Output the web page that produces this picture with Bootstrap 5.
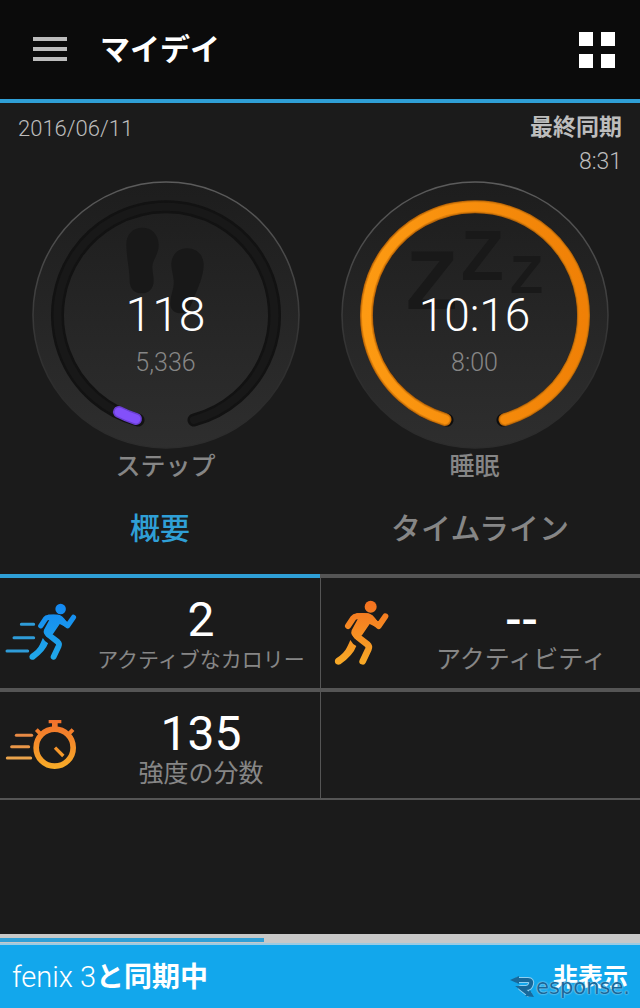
<!DOCTYPE html>
<html lang="ja" data-bs-theme="dark">
<head>
<meta charset="utf-8">
<meta name="viewport" content="width=device-width, initial-scale=1">
<title>マイデイ</title>
<link href="https://cdn.jsdelivr.net/npm/bootstrap@5.3.0/dist/css/bootstrap.min.css" rel="stylesheet">
<style>
  :root { --accent: #2f9fd6; --rule: #555; --muted: #868686; --soft: #bdbdbd; }
  body { background: #1b1b1b; color: #fff; font-family: Roboto, "Noto Sans CJK JP", sans-serif; }
  h1, h2, p { margin: 0; }
  .topbar { background: #0b0b0b; border-bottom: 4px solid var(--accent); height: 103px; padding: 0 24px 0 32px; }
  .topbar h1 { font-size: 30px; line-height: 40px; font-weight: 700; margin-left: 33px; }
  .sync-info { color: var(--soft); font-size: 23px; line-height: 34px; font-weight: 300; padding: 8px 18px 2px; }
  .sync-info time { font-size: 22px; line-height: 36px; }
  .sync-title { font-weight: 700; }
  .dials { padding: 0 11px; }
  .dial { display: grid; justify-items: center; }
  .dial > * { grid-area: 1 / 1; }
  .dial-svg { width: 268px; height: 268px; }
  .dial-text { padding-top: 106px; font-weight: 300; text-align: center; }
  .dial-value { font-size: 48px; line-height: 56px; }
  .dial-value.clock { font-size: 46px; }
  .dial-goal { font-size: 25px; line-height: 32px; margin-top: 4px; color: var(--muted); }
  .dial-name { font-size: 25px; line-height: 35px; font-weight: 500; color: var(--muted); text-align: center; }
  .view-tabs .nav-link { border: 0; border-bottom: 4px solid var(--rule); border-radius: 0; background: none; color: var(--muted); font-size: 30px; line-height: 40px; font-weight: 500; padding: 25px 0; }
  .view-tabs .nav-link.active { color: var(--accent); border-color: var(--accent); }
  .metric { min-height: 114px; border-bottom: 4px solid var(--rule); }
  .metric.last-row { min-height: 108px; border-bottom-width: 2px; }
  .metric.right-col { border-left: 1px solid var(--rule); }
  .metric-icon { width: 82px; height: 66px; }
  .metric-text { padding-top: 18px; }
  .metric-value { font-size: 48px; line-height: 48px; }
  .metric-value.blank { font-weight: 500; }
  .metric-label { font-size: 25px; line-height: 32px; color: var(--muted); }
  .metric-label.long { font-size: 21px; }
  .sync-progress { height: 11px; border-radius: 0; background: #c8c8c8; border-bottom: 2px solid #9ccbe2; padding: 4px 0 1px; }
  .sync-progress .progress-bar { background: var(--accent); }
  .sync-bar { background: #12a7ec; height: 63px; padding: 2px 12px 0; font-size: 28px; line-height: 40px; }
  .sync-bar .device { font-size: 29px; font-weight: 300; }
  .sync-bar .hide-btn { font-size: 25px; line-height: 40px; font-weight: 700; color: #fff; }
  .watermark { right: 10px; bottom: 8px; color: #17699b; font: 21px/26px "DejaVu Sans", sans-serif; text-shadow: 0 0 2px #a9dcf5, 0 0 1px #a9dcf5; pointer-events: none; }
</style>
</head>
<body>
<svg width="0" height="0" class="position-absolute" aria-hidden="true">
  <defs>
    <linearGradient id="face" x1="0" y1="0" x2="0" y2="1"><stop offset="0" stop-color="#1d1d1d"/><stop offset="1" stop-color="#2e2e2e"/></linearGradient>
    <linearGradient id="rim" x1="0" y1="0" x2="0" y2="1"><stop offset="0" stop-color="#5c5c5c"/><stop offset=".6" stop-color="#343434"/><stop offset=".8" stop-color="#2c2c2c"/></linearGradient>
    <linearGradient id="blue" gradientUnits="userSpaceOnUse" x1="0" y1="30" x2="0" y2="225"><stop offset="0" stop-color="#1388f2"/><stop offset="1" stop-color="#21a9e8"/></linearGradient>
    <linearGradient id="orange" gradientUnits="userSpaceOnUse" x1="0" y1="30" x2="0" y2="225"><stop offset="0" stop-color="#f4701f"/><stop offset="1" stop-color="#f8ab27"/></linearGradient>
    <linearGradient id="watch" gradientUnits="userSpaceOnUse" x1="0" y1="390" x2="0" y2="540"><stop offset="0" stop-color="#f2702c"/><stop offset="1" stop-color="#f8ae28"/></linearGradient>
    <linearGradient id="amber" gradientUnits="userSpaceOnUse" x1="-110" y1="0" x2="110" y2="0"><stop offset="0" stop-color="#fd9a12"/><stop offset="1" stop-color="#f08006"/></linearGradient>
    <g id="runner" stroke-linecap="round" stroke-linejoin="round">
      <circle cx="137" cy="50" r="18" stroke="none"/>
      <path fill="none" stroke-width="18" d="M69 108L85 84Q88 80 96 79L128 79L161 108L181 79"/>
      <path stroke="none" d="M94 70Q120 68 134 71Q143 74 150 84L160 98L154 112L134 102L112 134L96 150Q74 136 80 121L98 88Z"/>
      <path fill="none" stroke-width="20" d="M96 130Q92 136 100 142L127 163Q134 169 130 178L113 214"/>
      <path stroke="none" d="M76 150Q82 162 94 168Q84 196 46 223Q37 227 31 220Q27 211 34 205Q58 190 66 172Q72 160 76 150Z"/>
    </g>
  </defs>
</svg>

<div class="d-flex flex-column min-vh-100">
  <header class="topbar d-flex align-items-center">
    <button class="btn p-0 border-0 d-flex" type="button" aria-label="メニュー">
      <svg width="35" height="25" viewBox="0 0 35 25" fill="#bcbcbc"><path d="M1 0h34v4H1zM1 10h34v4H1zM1 20h34v4H1z"/></svg>
    </button>
    <h1>マイデイ</h1>
    <button class="btn p-0 border-0 d-flex ms-auto" type="button" aria-label="グリッド">
      <svg width="37" height="36" viewBox="0 0 37 36" fill="#fff"><path d="M0 0h14v14H0zM22 0h14v14H22zM0 22h14v14H0zM22 22h14v14H22z"/></svg>
    </button>
  </header>

  <main>
    <div class="sync-info d-flex justify-content-between">
      <time datetime="2016-06-11">2016/06/11</time>
      <div class="text-end"><div class="sync-title">最終同期</div><div>8:31</div></div>
    </div>

    <div class="dials row g-0">
      <section class="col-6">
        <div class="dial">
          <svg class="dial-svg" viewBox="-134 -134 268 268" aria-hidden="true">
            <circle r="133" fill="url(#face)" stroke="url(#rim)" stroke-width="1.5"/>
            <g transform="scale(.3333) translate(-437 -435)" fill="#181818">
              <path d="M366 173C395 173 415 195 415 225C415 255 396 270 396 290C396 305 400 315 400 332C400 355 385 370 364 370C342 370 328 355 328 332C328 300 318 260 318 222C318 193 338 173 366 173Z"/>
              <path d="M500 235C530 235 550 255 550 285C550 320 530 360 518 390C510 415 500 430 480 430C460 430 447 415 450 395C452 370 462 355 460 330C458 310 453 300 453 280C455 252 475 235 500 235Z"/>
            </g>
            <g fill="none" stroke-linecap="round">
              <path d="M-28 105A108.5 108.5 0 1 1 28 105" stroke="#121212" stroke-width="13"/>
              <path d="M-28 105A108.5 108.5 0 1 1 28 105" stroke="#181818" stroke-width="8"/>
              <path d="M-30 104A108.5 108.5 0 0 1 -47 97" stroke="#6a3fd0" stroke-width="12"/>
              <path d="M-30 104A108.5 108.5 0 0 1 -47 97" stroke="#8350fa" stroke-width="9"/>
            </g>
          </svg>
          <div class="dial-text"><p class="dial-value">118</p><p class="dial-goal">5,336</p></div>
        </div>
        <h2 class="dial-name">ステップ</h2>
      </section>
      <section class="col-6">
        <div class="dial">
          <svg class="dial-svg" viewBox="-134 -134 268 268" aria-hidden="true">
            <circle r="133" fill="url(#face)" stroke="url(#rim)" stroke-width="1.5"/>
            <g fill="#191919" font-family="Liberation Sans, sans-serif" font-weight="700">
              <text x="-69" y="-6" font-size="84">Z</text><text x="-14" y="-35" font-size="70">Z</text><text x="35" y="-22" font-size="54">Z</text>
            </g>
            <g fill="none" stroke-linecap="round">
              <path d="M-28 105A108.5 108.5 0 1 1 28 105" stroke="#0c0c0c" stroke-width="13"/>
              <path d="M-30 104.500A108.500 108.500 0 1 1 30 104.500" stroke="#b8660b" stroke-width="13"/>
              <path d="M-30 104.500A108.500 108.500 0 1 1 30 104.500" stroke="#dd7f0a" stroke-width="11"/>
              <path d="M-30 104.500A108.500 108.500 0 1 1 30 104.500" stroke="url(#amber)" stroke-width="9"/>
            </g>
          </svg>
          <div class="dial-text"><p class="dial-value clock">10:16</p><p class="dial-goal">8:00</p></div>
        </div>
        <h2 class="dial-name">睡眠</h2>
      </section>
    </div>

    <div class="view-tabs nav nav-fill row g-0" role="tablist">
      <button class="nav-link active col-6" type="button" role="tab" aria-selected="true">概要</button>
      <button class="nav-link col-6" type="button" role="tab" aria-selected="false">タイムライン</button>
    </div>

    <div class="row g-0">
      <div class="metric col-6 d-flex align-items-center">
        <svg class="metric-icon flex-shrink-0" viewBox="0 30 246 198" aria-hidden="true">
          <path d="M64 103H101M42 143H101M21 183H83" stroke="#2f9cd8" stroke-width="9" stroke-linecap="round"/>
          <use href="#runner" transform="translate(62 13) scale(.875)" fill="url(#blue)" stroke="url(#blue)"/>
        </svg>
        <div class="metric-text flex-grow-1 text-center align-self-start"><p class="metric-value">2</p><p class="metric-label long">アクティブなカロリー</p></div>
      </div>
      <div class="metric right-col col-6 d-flex align-items-center">
        <svg class="metric-icon flex-shrink-0" viewBox="-12 30 246 198" aria-hidden="true">
          <use href="#runner" fill="url(#orange)" stroke="url(#orange)"/>
        </svg>
        <div class="metric-text flex-grow-1 text-center align-self-start"><p class="metric-value blank">--</p><p class="metric-label">アクティビティ</p></div>
      </div>
      <div class="metric last-row col-6 d-flex align-items-center">
        <svg class="metric-icon flex-shrink-0" viewBox="0 366 246 198" aria-hidden="true">
          <g fill="none" stroke-width="9" stroke-linecap="round"><path d="M49 436H95" stroke="#e88a45"/><path d="M35 470H86" stroke="#ea9748"/><path d="M22 504H92" stroke="#eba44c"/></g>
          <g fill="none" stroke="url(#watch)"><circle cx="164" cy="473" r="55.500" stroke-width="17"/><path d="M109 419L123 433M219 419L205 433" stroke-width="12"/><path d="M165 473L190 498" stroke-width="10"/></g>
          <path d="M146 390H184V400H173V415H156V400H146Z" fill="url(#watch)"/>
        </svg>
        <div class="metric-text flex-grow-1 text-center align-self-start"><p class="metric-value">135</p><p class="metric-label">強度の分数</p></div>
      </div>
      <div class="metric last-row right-col col-6"></div>
    </div>
  </main>

  <footer class="mt-auto position-relative">
    <div class="progress sync-progress" role="progressbar" aria-label="同期の進行状況" aria-valuenow="41" aria-valuemin="0" aria-valuemax="100"><div class="progress-bar" style="width: 41.25%"></div></div>
    <div class="sync-bar d-flex align-items-center justify-content-between">
      <div><span class="device">fenix 3</span><b>と同期中</b></div>
      <button class="hide-btn btn p-0 border-0" type="button">非表示</button>
    </div>
    <div class="watermark position-absolute d-flex align-items-center">
      <svg width="26" height="24" viewBox="0 0 26 24" fill="none" aria-hidden="true">
        <g stroke="#8fd0f1" stroke-width="6" stroke-linejoin="round"><path d="M6 5H18Q22 5 21 9Q20 13 16 13H11L20 20"/></g>
        <path d="M6 5H18Q22 5 21 9Q20 13 16 13H11L20 20" stroke="#17699b" stroke-width="4"/>
        <path d="M0 5L9 1V9ZM24 22L15 21L20 15Z" fill="#17699b"/>
      </svg>
      <span>esponse.</span>
    </div>
  </footer>
</div>
<script src="https://cdn.jsdelivr.net/npm/bootstrap@5.3.0/dist/js/bootstrap.bundle.min.js"></script>
</body>
</html>
